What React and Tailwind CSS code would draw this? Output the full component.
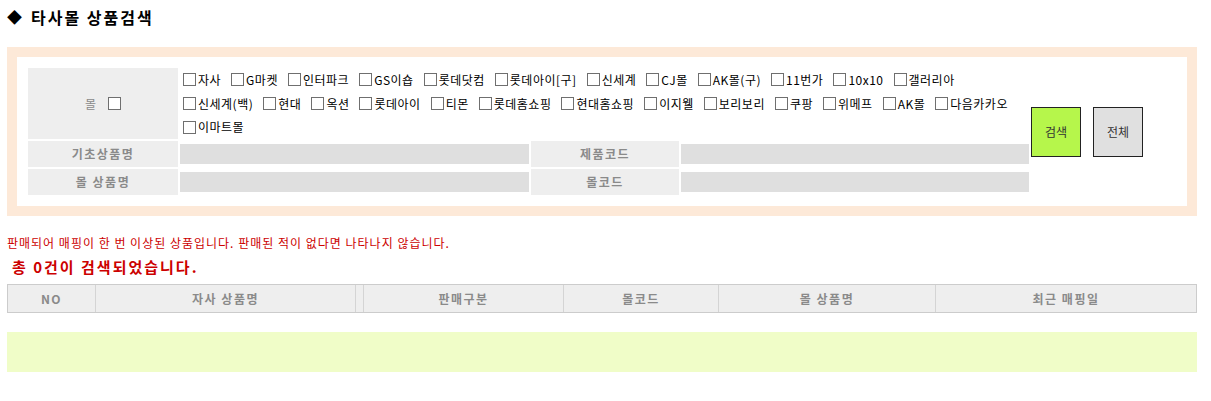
import React from "react";

const mallRows = [
  ["자사", "G마켓", "인터파크", "GS이숍", "롯데닷컴", "롯데아이[구]", "신세계", "CJ몰", "AK몰(구)", "11번가", "10x10", "갤러리아"],
  ["신세계(백)", "현대", "옥션", "롯데아이", "티몬", "롯데홈쇼핑", "현대홈쇼핑", "이지웰", "보리보리", "쿠팡", "위메프", "AK몰", "다음카카오"],
  ["이마트몰"],
];

const columns = [
  { label: "NO", width: "w-[88px]" },
  { label: "자사 상품명", width: "w-[260px]" },
  { label: "", width: "w-[8px]" },
  { label: "판매구분", width: "w-[200px]" },
  { label: "몰코드", width: "w-[155px]" },
  { label: "몰 상품명", width: "w-[217px]" },
  { label: "최근 매핑일", width: "flex-1" },
];

const Box = () => (
  <span className="inline-block h-[13px] w-[13px] shrink-0 border border-[#6f6f6f] bg-white" />
);

const MallCheck = ({ name }) => (
  <label className="flex items-center gap-[2px] whitespace-nowrap tracking-[0.5px]">
    <Box />
    <span>{name}</span>
  </label>
);

const Label = ({ children }) => (
  <div className="flex items-center justify-center bg-[#eeeeee] font-bold tracking-[1.5px] text-[#8a8a8a]">
    {children}
  </div>
);

const Field = () => (
  <div className="flex items-center">
    <div className="h-[20px] w-full bg-[#dfdfdf]" />
  </div>
);

export default function App() {
  return (
    <div
      className="min-h-screen bg-white text-[12px] text-black"
      style={{ fontFamily: '"Noto Sans CJK KR", "Noto Sans", sans-serif' }}
    >
      <h1 className="flex h-[33px] items-center pl-[7px] text-[16px] font-bold leading-none tracking-[2px]">
        <span className="mr-[9px] text-[15px] tracking-normal">◆</span>타사몰 상품검색
      </h1>

      <div className="ml-[7px] mt-[14px] w-[1190px] border-[10px] border-[#fde9d8]">
        <div className="p-[11px] pr-[10px]">
          <div className="grid grid-cols-[150px_349px_148px_348px_1fr] grid-rows-[71px_26px_26px] gap-x-[2px] gap-y-[2px]">
            <div className="flex items-center justify-center gap-[12px] bg-[#eeeeee] text-[#8a8a8a]">
              <span>몰</span>
              <Box />
            </div>
            <div className="col-span-3 flex flex-col pl-[3px]">
              {mallRows.map((row, i) => (
                <div key={i} className="flex h-[24px] items-center gap-x-[10px]">
                  {row.map((name) => (
                    <MallCheck key={name} name={name} />
                  ))}
                </div>
              ))}
            </div>
            <div className="row-span-3 flex items-center gap-[12px] pt-[1px]">
              <button
                type="button"
                className="h-[50px] w-[50px] border border-[#222] bg-[#b6f64b] text-[12px] text-[#333]"
              >
                검색
              </button>
              <button
                type="button"
                className="h-[50px] w-[50px] border border-[#222] bg-[#e0e0e0] text-[12px] text-[#333]"
              >
                전체
              </button>
            </div>

            <Label>기초상품명</Label>
            <Field />
            <Label>제품코드</Label>
            <Field />

            <Label>몰 상품명</Label>
            <Field />
            <Label>몰코드</Label>
            <Field />
          </div>
        </div>
      </div>

      <p className="ml-[7px] mt-[19px] text-[12px] leading-[16px] tracking-[1px] text-[#cc0000]">
        판매되어 매핑이 한 번 이상된 상품입니다. 판매된 적이 없다면 나타나지 않습니다.
      </p>
      <p className="ml-[12px] mt-[6px] text-[15px] font-bold leading-[20px] tracking-[2px] text-[#cc0000]">
        총 0건이 검색되었습니다.
      </p>

      <div className="ml-[7px] mt-[7px] flex h-[29px] w-[1190px] border border-[#cccccc] bg-[#eeeeee]">
        {columns.map((col, i) => (
          <div
            key={i}
            className={`${col.width} flex items-center justify-center font-bold tracking-[1.5px] text-[#8a8a8a] ${
              i < columns.length - 1 ? "border-r border-[#d4d4d4]" : ""
            }`}
          >
            {col.label}
          </div>
        ))}
      </div>

      <div className="ml-[7px] mt-[19px] h-[40px] w-[1190px] bg-[#f0fdc8]" />
    </div>
  );
}
